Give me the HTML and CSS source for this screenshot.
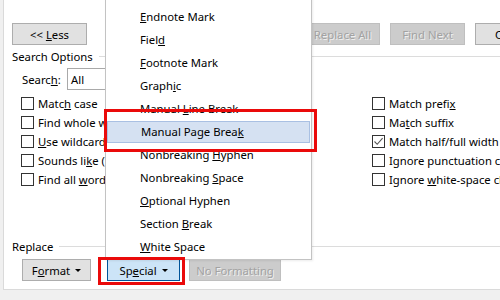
FILE: index.html
```html
<!DOCTYPE html>
<html>
<head>
<meta charset="utf-8">
<link rel="stylesheet" href="styles.css">
</head>
<body>
<div class="dialog">
  <div class="top-row">
    <button class="btn less"><span>&lt;&lt; <u>L</u>ess</span></button>
    <div class="right-btns">
      <button class="btn disabled"><span>Replace</span></button>
      <button class="btn disabled"><span>Replace All</span></button>
      <button class="btn disabled"><span>Find Next</span></button>
      <button class="btn"><span>Cancel</span></button>
    </div>
  </div>

  <div class="group-label"><span>Search Options</span><i class="rule"></i></div>

  <div class="search-row">
    <span class="search-lbl">Searc<u>h</u>:</span>
    <div class="select">All</div>
  </div>

  <div class="options">
    <div class="col">
      <label class="opt"><span class="cb"></span><span>Matc<u>h</u> case</span></label>
      <label class="opt"><span class="cb"></span><span>Find whole words onl<u>y</u></span></label>
      <label class="opt"><span class="cb"></span><span><u>U</u>se wildcards</span></label>
      <label class="opt"><span class="cb"></span><span>Sounds li<u>k</u>e (English)</span></label>
      <label class="opt"><span class="cb"></span><span>Find all <u>w</u>ord forms (English)</span></label>
    </div>
    <div class="col">
      <label class="opt"><span class="cb"></span><span>Match prefi<u>x</u></span></label>
      <label class="opt"><span class="cb"></span><span>Ma<u>t</u>ch suffix</span></label>
      <label class="opt"><span class="cb checked"><svg width="11" height="11" viewBox="0 0 11 11"><polyline points="1.5,5.5 4.2,8.3 9.6,2.2" fill="none" stroke="#555" stroke-width="1.1"/></svg></span><span>Match half/full width</span></label>
      <label class="opt"><span class="cb"></span><span>Ignore punctuation characters</span></label>
      <label class="opt"><span class="cb"></span><span>Ignore <u>w</u>hite-space characters</span></label>
    </div>
  </div>

  <div class="group-label replace-lbl"><span>Replace</span><i class="rule"></i></div>

  <div class="btn-row">
    <button class="btn fmt"><span>F<u>o</u>rmat</span><i class="caret"></i></button>
    <button class="btn special"><span>Sp<u>e</u>cial</span><i class="caret"></i></button>
    <button class="btn disabled nofmt"><span>No Formatting</span></button>
  </div>
</div>

<ul class="menu">
  <li>En <u>D</u>ash</li>
  <li><u>E</u>ndnote Mark</li>
  <li>Fiel<u>d</u></li>
  <li><u>F</u>ootnote Mark</li>
  <li>Graph<u>i</u>c</li>
  <li>Manual <u>L</u>ine Break</li>
  <li class="hl">Manual Page Brea<u>k</u></li>
  <li>Nonbreaking <u>H</u>yphen</li>
  <li>Nonbreaking <u>S</u>pace</li>
  <li><u>O</u>ptional Hyphen</li>
  <li>Section <u>B</u>reak</li>
  <li><u>W</u>hite Space</li>
</ul>

<div class="mark mark-menu"></div>
<div class="mark mark-special"></div>
</body>
</html>
```

FILE: styles.css
```css
* { box-sizing: border-box; }
html, body { margin: 0; padding: 0; }
body {
  width: 500px;
  height: 300px;
  overflow: hidden;
  position: relative;
  background: #f0f0f0;
  font-family: "Noto Sans", "Open Sans", sans-serif;
  font-size: 11.3px;
  color: #000;
}
u { text-decoration: underline; text-underline-offset: 1px; }

.dialog {
  margin-left: 3px;
  width: 620px;
  height: 290px;
  background: #fff;
  border-left: 1px solid #dadada;
  border-bottom: 1px solid #dadada;
  padding: 23px 0 0 8px;
}

.btn {
  font: inherit;
  color: #000;
  height: 22px;
  padding: 0;
  flex: none;
  background: #e1e1e1;
  border: 1px solid #adadad;
  display: inline-flex;
  align-items: center;
  justify-content: center;
  white-space: nowrap;
}
.btn.disabled {
  background: #cccccc;
  border-color: #bfbfbf;
  color: #a2a2a2;
  text-shadow: 1px 1px 0 rgba(255,255,255,0.7);
}

.top-row { display: flex; height: 22px; }
.less { width: 75px; }
.right-btns { display: flex; gap: 10px; margin-left: 133px; flex: none; }
.right-btns .btn { width: 75px; }

.group-label {
  display: flex;
  align-items: center;
  height: 16px;
  margin-top: 3px;
  white-space: nowrap;
}
.group-label .rule {
  flex: 1;
  height: 1px;
  background: #dcdcdc;
  margin-left: 6px;
}

.search-row {
  display: flex;
  align-items: center;
  height: 22px;
  margin-top: 4px;
  padding-left: 10px;
}
.search-lbl { width: 45px; flex: none; }
.select {
  width: 160px;
  flex: none;
  height: 22px;
  border: 1px solid #a9a9a9;
  padding-left: 3px;
  display: flex;
  align-items: center;
}

.options {
  display: flex;
  margin-top: 4px;
  padding-left: 9px;
}
.col { display: flex; flex-direction: column; flex: none; }
.col:first-child { width: 351px; }
.opt {
  height: 19px;
  display: flex;
  align-items: center;
  white-space: nowrap;
}
.cb {
  width: 13px;
  height: 13px;
  border: 1px solid #333;
  background: #fff;
  margin-right: 4px;
  flex: none;
  display: flex;
  align-items: center;
  justify-content: center;
}

.replace-lbl { margin-top: 49px; }

.btn-row {
  display: flex;
  margin-top: 5px;
  padding-left: 10px;
}
.fmt { width: 69px; }
.special {
  width: 73px;
  margin-left: 16px;
  background: #cce4f7;
  border-color: #005499;
}
.nofmt { width: 92px; margin-left: 9px; }
.caret {
  width: 0; height: 0;
  border-left: 3px solid transparent;
  border-right: 3px solid transparent;
  border-top: 3px solid #000;
  margin-left: 5px;
}

.menu {
  position: absolute;
  left: 105px;
  top: -18px;
  width: 207px;
  margin: 0;
  padding: 0;
  list-style: none;
  background: #fff;
  border: 1px solid #c3c3c3;
  box-shadow: 1px 1px 2px rgba(0,0,0,0.08);
}
.menu li {
  height: 23px;
  line-height: 22px;
  padding-left: 34px;
  white-space: nowrap;
}
.menu li.hl {
  height: 22px;
  margin: 0 1px 1px;
  padding-left: 33px;
  line-height: 20px;
  background: #d5e1f2;
  border: 1px solid #a9c0e3;
}

.mark {
  position: absolute;
  border: 3px solid #ea0a0a;
}
.mark-menu { left: 104px; top: 109px; width: 213px; height: 43px; }
.mark-special { left: 98px; top: 257px; width: 87px; height: 28px; }
```
